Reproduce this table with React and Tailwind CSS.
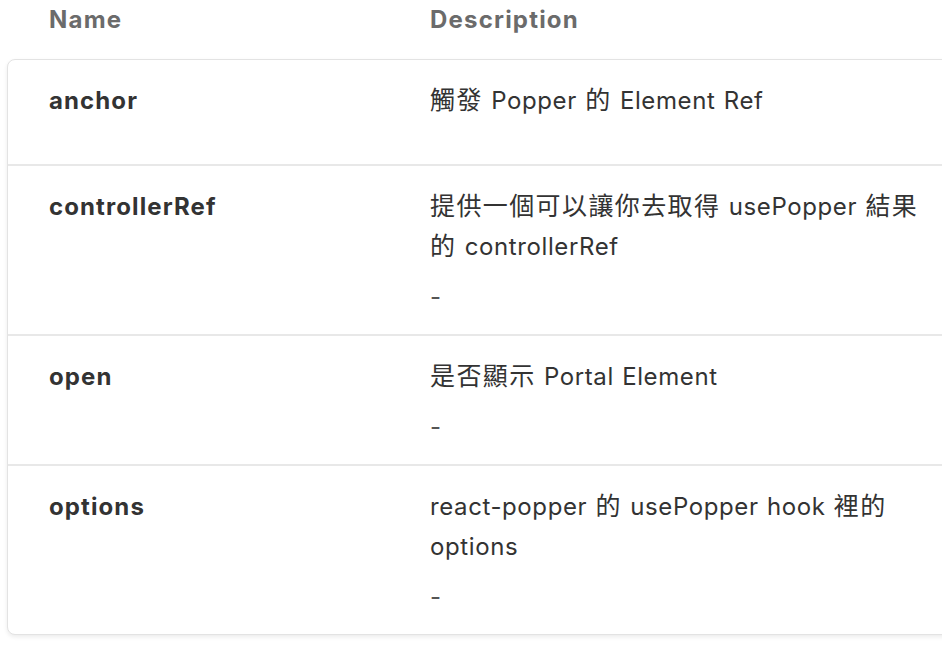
const CJK = /([\u3400-\u9fff]+)/;

function Txt({ s }) {
  return s.split(CJK).map((part, i) =>
    CJK.test(part) ? (
      <span key={i} className="text-[25px] leading-none tracking-[1.4px]">
        {part}
      </span>
    ) : (
      <span key={i}>{part}</span>
    )
  );
}

export default function App() {
  const rows = [
    { name: "anchor", desc: ["觸發 Popper 的 Element Ref"], def: "" },
    { name: "controllerRef", desc: ["提供一個可以讓你去取得 usePopper 結果", "的 controllerRef"], def: "-" },
    { name: "open", desc: ["是否顯示 Portal Element"], def: "-" },
    { name: "options", desc: ["react-popper 的 usePopper hook 裡的", "options"], def: "-" },
  ];
  return (
    <div
      className="w-[942px] h-[648px] overflow-hidden bg-white"
      style={{ fontFamily: '"Inter", "Noto Sans CJK TC", sans-serif' }}
    >
      <div className="flex h-[59px] text-[24px] leading-[40px] font-bold tracking-[1.2px] text-[#6b6b6b]">
        <div className="w-[430px] pl-[49px]">Name</div>
        <div>Description</div>
      </div>
      <div className="ml-[7px] w-[1000px] rounded-lg border border-[#e3e3e3] bg-white shadow-[0_2px_4px_rgba(0,0,0,0.08)]">
        {rows.map((r, i) => (
          <div
            key={r.name}
            className={
              "flex pt-[21px] pb-[25px] " + (i > 0 ? "border-t-2 border-[#e8e8e8]" : "")
            }
          >
            <div className="w-[422px] pl-[41px] text-[24px] leading-[40px] font-bold tracking-[1.1px] text-[#333333]">
              {r.name}
            </div>
            <div className="w-[500px] text-[24px] tracking-[0.6px] [word-spacing:1px] text-[#333333]">
              {r.desc.map((d) => (
                <div key={d} className="h-[40px] leading-[40px] whitespace-nowrap">
                  <Txt s={d} />
                </div>
              ))}
              <div className="mt-[18px] h-[24px] leading-[24px] text-[#555555] empty:h-0">{r.def}</div>
            </div>
          </div>
        ))}
      </div>
    </div>
  );
}
